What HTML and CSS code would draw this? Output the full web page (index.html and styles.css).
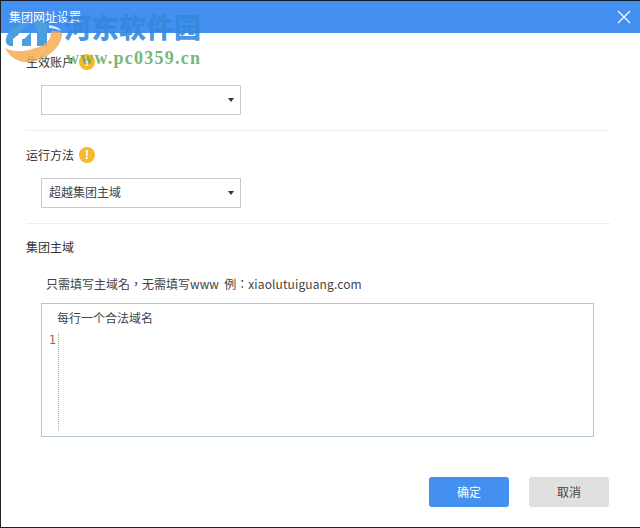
FILE: index.html
```html
<!DOCTYPE html>
<html lang="zh-CN">
<head>
<meta charset="utf-8">
<title>集团网址设置</title>
<link rel="stylesheet" href="styles.css">
</head>
<body>
<div class="window">
  <header class="titlebar">
    <span class="title">集团网址设置</span>
    <svg class="close" width="14" height="14" viewBox="0 0 14 14"><path d="M1 1L13 13M13 1L1 13" stroke="#fff" stroke-width="1.1" fill="none"/></svg>
  </header>
  <main class="content">
    <section class="group first">
      <div class="label-row"><span>生效账户</span><span class="warn">!</span></div>
      <div class="select"><span></span><i class="caret"></i></div>
    </section>
    <section class="group">
      <div class="label-row"><span>运行方法</span><span class="warn">!</span></div>
      <div class="select"><span>超越集团主域</span><i class="caret"></i></div>
    </section>
    <section class="group last">
      <div class="label-row"><span>集团主域</span></div>
      <p class="hint" lang="zh-Hant">只需填写主域名，无需填写www &nbsp;例：<span class="hint-latin">xiaolutuiguang.com</span></p>
      <div class="editor">
        <div class="placeholder">每行一个合法域名</div>
        <div class="gutter"><span class="lineno">1</span></div>
      </div>
    </section>
    <footer class="actions">
      <button class="btn primary">确定</button>
      <button class="btn">取消</button>
    </footer>
  </main>
  <div class="watermark">
    <svg class="wm-logo" width="70" height="70" viewBox="0 0 70 70">
      <path d="M6 42C5 31 17 24 30 22C24 27 20 31 18 35L13 39V46H10C8 45 6 44 6 42Z" fill="#4a9fdc"/>
      <path d="M24 39L31 32V46H22V39Z" fill="#4a9fdc"/>
      <path d="M34 22C38 21 43 22 47 24V46H37V30Z" fill="#4a9fdc"/>
      <path d="M49 25C55 26 60 28 61 31C57 29 53 28 49 28Z" fill="#ffffff" opacity=".85"/>
      <path d="M51 31C55 31 59 31 62 33C63 45 48 60 30 62C19 63 10 58 5 48C12 52 24 52 32 49C42 47 52 42 51 31Z" fill="#f5a94e" opacity=".82"/>
    </svg>
    <span class="wm-cn">河东软件园</span>
    <span class="wm-url">www.pc0359.cn</span>
  </div>
</div>
</body>
</html>
```
FILE: styles.css
```css
* { box-sizing: border-box; }
html, body { margin: 0; padding: 0; }
body {
  width: 640px;
  height: 528px;
  overflow: hidden;
  background: #fff;
  color: #333;
  font-family: "Noto Sans CJK SC", "Liberation Sans", sans-serif;
  font-size: 12px;
}
.window {
  position: relative;
  width: 640px;
  height: 528px;
  border-top: 1px solid #10182a;
  border-bottom: 1px solid #222;
  border-left: 1px solid #222;
  display: flex;
  flex-direction: column;
}
.titlebar {
  height: 32px;
  flex: none;
  background: #4390f0;
  color: #fff;
  display: flex;
  align-items: center;
  justify-content: space-between;
  padding: 0 9px 0 8px;
}
.title { font-size: 12px; line-height: 16px; }
.content {
  flex: 1;
  padding: 0 30px 0 25px;
  display: flex;
  flex-direction: column;
}
.group { border-bottom: 1px solid #eeeeee; height: 93px; padding-top: 16px; }
.group.first { height: 98px; padding-top: 21px; }
.group.last { border-bottom: 0; height: 214px; padding-top: 15px; }
.label-row {
  display: flex;
  align-items: center;
  gap: 5px;
  height: 16px;
  line-height: 16px;
  color: #333;
}
.warn {
  width: 16px;
  height: 16px;
  border-radius: 50%;
  background: #f5b82e;
  color: #fff;
  font-family: "Liberation Sans", sans-serif;
  font-weight: 700;
  font-size: 13px;
  line-height: 16px;
  text-align: center;
}
.select {
  width: 200px;
  height: 30px;
  margin: 15px 0 0 15px;
  border: 1px solid #c8cbcf;
  background: #fff;
  display: flex;
  align-items: center;
  justify-content: space-between;
  padding: 0 6px 3px 7px;
  color: #444;
}
.caret {
  width: 0;
  height: 0;
  margin-top: 3px;
  border-left: 3px solid transparent;
  border-right: 3px solid transparent;
  border-top: 4px solid #333;
}
.hint {
  margin: 21px 0 0 20px;
  height: 16px;
  line-height: 16px;
  font-family: "Noto Sans CJK TC", "Noto Sans CJK SC", sans-serif;
  font-size: 12px;
  color: #444;
  white-space: nowrap;
}
.hint-latin { letter-spacing: .12px; }
.editor {
  width: 553px;
  height: 134px;
  margin: 11px 0 0 15px;
  border: 1px solid #b4c4d0;
  padding: 7px 0 0 15px;
}
.placeholder { line-height: 14px; height: 14px; color: #444; }
.gutter {
  margin: 8px 0 0 -15px;
  width: 17px;
  height: 97px;
  border-right: 1px dotted #aaa;
  text-align: right;
  padding-right: 2px;
}
.lineno {
  display: block;
  font-family: "DejaVu Sans Mono", monospace;
  font-size: 12px;
  line-height: 14px;
  color: #a9645c;
}
.actions {
  display: flex;
  justify-content: flex-end;
  gap: 20px;
  margin-top: 39px;
  padding-right: 1px;
}
.btn {
  width: 80px;
  height: 30px;
  border: 0;
  border-radius: 3px;
  background: #e0e0e0;
  color: #444;
  font-family: inherit;
  font-size: 12px;
  padding: 0 0 2px;
}
.btn.primary { background: #4390f0; color: #fff; }
.watermark {
  position: absolute;
  left: -1px;
  top: -1px;
  width: 220px;
  height: 70px;
  pointer-events: none;
}
.wm-logo { position: absolute; left: 0; top: 0; }
.wm-cn {
  position: absolute;
  left: 64px;
  top: 10px;
  font-family: "Noto Sans CJK SC", sans-serif;
  font-weight: 900;
  font-size: 27px;
  line-height: 34px;
  letter-spacing: 0.5px;
  color: rgba(50, 135, 220, .9);
  white-space: nowrap;
}
.wm-url {
  position: absolute;
  left: 66px;
  top: 48px;
  font-family: "Liberation Serif", serif;
  font-weight: 700;
  font-size: 18px;
  line-height: 20px;
  letter-spacing: 1.25px;
  color: rgba(100, 175, 100, .9);
  white-space: nowrap;
}
```
